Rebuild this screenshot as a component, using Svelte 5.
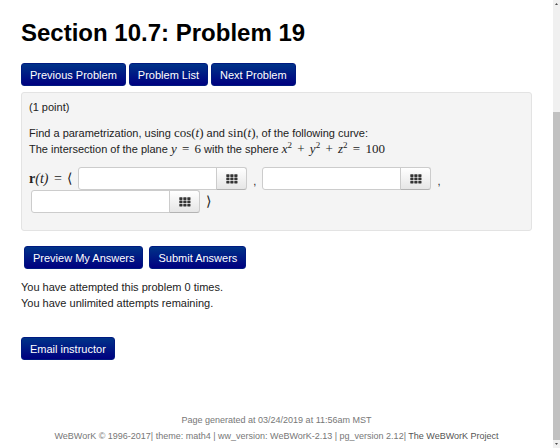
<script lang="ts">
	let answers = $state(['', '', '']);
	const cells = [0, 1, 2];
</script>

{#snippet answerBox(index: number)}
	<span class="answer">
		<input type="text" aria-label="answer {index + 1}" bind:value={answers[index]} />
		<button type="button" class="editor" aria-label="Open equation editor {index + 1}">
			<svg viewBox="0 0 12 10" width="12" height="10" aria-hidden="true">
				{#each cells as row (row)}
					{#each cells as col (col)}
						<rect x={col * 4 + 0.3} y={row * 3.3 + 0.3} width="3.2" height="2.6" rx="0.4" />
					{/each}
				{/each}
			</svg>
		</button>
	</span>
{/snippet}

{#snippet op(sign: string)}
	<span class="op">{sign}</span>
{/snippet}

<div class="page">
	<div class="content">
		<main>
			<h1>Section 10.7: Problem 19</h1>

			<nav>
				<button type="button" class="btn">Previous Problem</button>
				<button type="button" class="btn">Problem List</button>
				<button type="button" class="btn">Next Problem</button>
			</nav>

			<form onsubmit={(e) => e.preventDefault()}>
				<section class="problem">
					<p class="points">(1 point)</p>
					<p>
						Find a parametrization, using <span class="math">cos(<i>t</i>)</span> and
						<span class="math">sin(<i>t</i>)</span>, of the following curve:<br />
						The intersection of the plane <span class="math"><i>y</i> {@render op('=')} 6</span> with the
						sphere
						<span class="math"
							><i>x</i><sup>2</sup>
							{@render op('+')} <i>y</i><sup>2</sup>
							{@render op('+')} <i>z</i><sup>2</sup>
							{@render op('=')} 100</span
						>
					</p>
					<div class="vector">
						<span class="math lead"><b>r</b><i>(t)</i> {@render op('=')} ⟨</span>
						{@render answerBox(0)}
						<span class="comma">,</span>
						{@render answerBox(1)}
						<span class="comma">,</span>
						{@render answerBox(2)}
						<span class="math lead">⟩</span>
					</div>
				</section>

				<div class="submit">
					<button type="button" class="btn">Preview My Answers</button>
					<button type="submit" class="btn">Submit Answers</button>
				</div>
			</form>

			<p class="status">
				You have attempted this problem 0 times.<br />
				You have unlimited attempts remaining.
			</p>

			<button type="button" class="btn">Email instructor</button>
		</main>

		<footer>
			<p>Page generated at 03/24/2019 at 11:56am MST</p>
			<p>
				WeBWorK © 1996-2017| theme: math4 | ww_version: WeBWorK-2.13 | pg_version 2.12|
				<a href="#project">The WeBWorK Project</a>
			</p>
		</footer>
	</div>

	<div class="scrollbar" aria-hidden="true">
		<svg viewBox="0 0 7 8" width="7" height="8"><path d="M2 5 3.5 3 5 5z" /></svg>
		<div class="track"><div class="thumb"></div></div>
		<svg viewBox="0 0 7 8" width="7" height="8"><path d="M2 3h3L3.5 5z" /></svg>
	</div>
</div>

<style>
	:global(body) {
		background: #fff;
	}

	.page {
		display: flex;
		min-height: 100vh;
		font-family: 'Liberation Sans', Arial, sans-serif;
		font-size: 11px;
		line-height: 16px;
		color: #222;
	}

	.content {
		flex: 1;
		display: flex;
		flex-direction: column;
		justify-content: space-between;
		padding: 17px 21px 4px;
	}

	h1 {
		margin: 0 0 14px;
		font-size: 24px;
		line-height: 32px;
		color: #000;
	}

	nav {
		display: flex;
		gap: 3px;
		margin-bottom: 6px;
	}

	.btn {
		height: 23px;
		padding: 0 8px;
		border: 1px solid #001a80;
		border-radius: 3px;
		background: linear-gradient(#003388, #000080);
		color: #fff;
		font: inherit;
	}

	p {
		margin: 0;
	}

	.problem {
		padding: 6px 7px 17px;
		border: 1px solid #e3e3e3;
		border-radius: 3px;
		background: #f4f4f4;
	}

	.points {
		margin-bottom: 10px;
	}

	.math {
		font-family: 'Liberation Serif', 'Times New Roman', serif;
		font-size: 13px;
		line-height: 12px;
		white-space: nowrap;
	}

	.lead {
		font-size: 14px;
	}

	.op {
		margin: 0 2px;
	}

	sup {
		font-size: 9px;
		line-height: 0;
	}

	.vector {
		display: flex;
		flex-wrap: wrap;
		align-items: center;
		column-gap: 4px;
		margin-top: 10px;
	}

	.comma {
		padding-top: 4px;
	}

	.answer {
		display: flex;
		margin: 0 2px;
	}

	.answer input {
		box-sizing: border-box;
		width: 139px;
		height: 23px;
		padding: 0 4px;
		border: 1px solid #ccc;
		border-radius: 3px 0 0 3px;
		background: #fff;
		font: inherit;
		outline: 0;
	}

	.editor {
		display: flex;
		align-items: center;
		justify-content: center;
		width: 31px;
		height: 23px;
		margin-left: -1px;
		padding: 0;
		border: 1px solid #ccc;
		border-bottom-color: #b3b3b3;
		border-radius: 0 3px 3px 0;
		background: linear-gradient(#fff, #e6e6e6);
		fill: #333;
	}

	.submit {
		display: flex;
		gap: 6px;
		padding: 15px 3px 10px;
	}

	.status {
		margin-bottom: 26px;
	}

	footer {
		font-size: 9px;
		text-align: center;
		color: #777;
	}

	footer a {
		color: #555;
		text-decoration: none;
	}

	.scrollbar {
		display: flex;
		flex-direction: column;
		width: 7px;
		background: #f0f0f0;
		fill: #505050;
	}

	.track {
		flex: 1;
		display: flex;
		flex-direction: column;
		justify-content: flex-end;
	}

	.thumb {
		height: 76%;
		background: #c1c1c1;
	}
</style>
